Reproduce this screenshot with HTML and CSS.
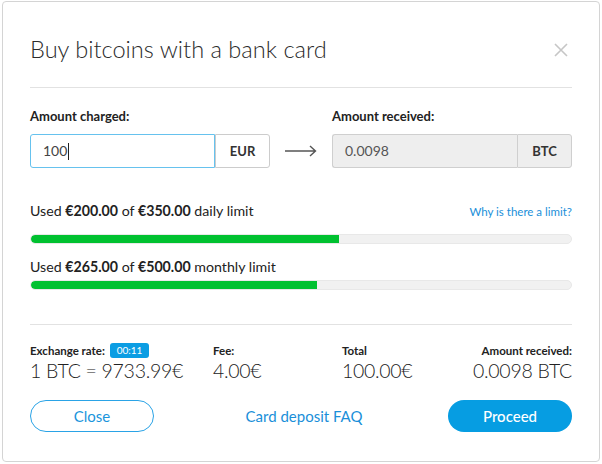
FILE: index.html
```html
<!DOCTYPE html>
<html>
<head>
<meta charset="utf-8">
<link rel="stylesheet" href="styles.css">
</head>
<body>
<div class="modal">
  <div class="header">
    <h1 class="title">Buy bitcoins with a bank card</h1>
    <svg class="close-x" width="14" height="14" viewBox="0 0 14 14"><path d="M1 1L13 13M13 1L1 13" stroke="#c6c6c6" stroke-width="1.6" fill="none"/></svg>
  </div>
  <div class="body">
    <div class="amounts">
      <div class="field">
        <div class="label">Amount charged:</div>
        <div class="group">
          <div class="input active">100<span class="caret"></span></div>
          <div class="addon">EUR</div>
        </div>
      </div>
      <svg class="arrow" width="32" height="12" viewBox="0 0 32 12"><path d="M0 6H30M25 1L30.5 6L25 11" stroke="#555" stroke-width="1.4" fill="none"/></svg>
      <div class="field">
        <div class="label">Amount received:</div>
        <div class="group disabled">
          <div class="input">0.0098</div>
          <div class="addon">BTC</div>
        </div>
      </div>
    </div>
    <div class="limit-row first">
      <span>Used <b>€200.00</b> of <b>€350.00</b> daily limit</span>
      <a class="why">Why is there a limit?</a>
    </div>
    <div class="bar bar-daily"><div class="fill" style="width:57.1%"></div></div>
    <div class="limit-row second">
      <span>Used <b>€265.00</b> of <b>€500.00</b> monthly limit</span>
    </div>
    <div class="bar"><div class="fill" style="width:53%"></div></div>
  </div>
  <div class="footer">
    <div class="stats">
      <div class="stat">
        <div class="stat-label">Exchange rate: <span class="badge">00:11</span></div>
        <div class="stat-value">1 BTC = 9733.99€</div>
      </div>
      <div class="stat">
        <div class="stat-label">Fee:</div>
        <div class="stat-value">4.00€</div>
      </div>
      <div class="stat">
        <div class="stat-label">Total</div>
        <div class="stat-value">100.00€</div>
      </div>
      <div class="stat right">
        <div class="stat-label">Amount received:</div>
        <div class="stat-value">0.0098 BTC</div>
      </div>
    </div>
    <div class="actions">
      <button class="btn btn-outline">Close</button>
      <a class="faq">Card deposit FAQ</a>
      <button class="btn btn-primary">Proceed</button>
    </div>
  </div>
</div>
</body>
</html>
```

FILE: styles.css
```css
* { box-sizing: border-box; }
html, body { margin: 0; padding: 0; background: #fff; }
body {
  font-family: Lato, "Open Sans", "Liberation Sans", sans-serif;
  color: #222;
}
.modal {
  margin: 1px 2px 0 2px;
  width: 598px;
  height: 461px;
  border: 1px solid #d4d4d4;
  border-radius: 4px;
  background: #fff;
  padding: 0 27px;
}
.header {
  display: flex;
  justify-content: space-between;
  align-items: center;
  padding: 33px 4px 24px 0;
  border-bottom: 1px solid #e2e2e2;
}
.title {
  margin: 0;
  font-size: 23.6px;
  line-height: 28px;
  font-weight: 300;
  color: #2b2b2b;
}
.close-x { display: block; margin-top: 2px; }
.body { padding-top: 20px; padding-bottom: 34px; border-bottom: 1px solid #e2e2e2; }
.amounts { display: flex; align-items: flex-end; justify-content: space-between; }
.field { width: 240px; }
.label { font-size: 13px; font-weight: 700; line-height: 16px; margin-bottom: 10px; color: #222; }
.group { display: flex; height: 34px; }
.input {
  flex: 1;
  border: 1px solid #ccc;
  border-right: none;
  border-radius: 3px 0 0 3px;
  font-size: 14px;
  line-height: 32px;
  padding-left: 12px;
  color: #444;
}
.input.active { border: 1px solid #66c2ee; }
.caret { display: inline-block; width: 1px; height: 17px; background: #222; vertical-align: -4px; margin-left: 1px; }
.addon {
  width: 55px;
  border: 1px solid #ccc;
  border-radius: 0 3px 3px 0;
  font-size: 13px;
  font-weight: 700;
  line-height: 32px;
  text-align: center;
  color: #333;
}
.group.disabled .input, .group.disabled .addon { background: #eeeeee; border-color: #cfcfcf; }
.group.disabled .input { color: #555; }
.arrow { margin-bottom: 11px; }
.limit-row {
  display: flex;
  justify-content: space-between;
  align-items: baseline;
  font-size: 14.2px;
  line-height: 18px;
  color: #222;
}
.limit-row b { font-weight: 700; }
.limit-row.first { margin-top: 34px; margin-bottom: 13px; }
.limit-row.second { margin-top: 14px; margin-bottom: 4px; }
.why { font-size: 11.5px; color: #1a8fd9; }
.bar {
  height: 10px;
  border-radius: 5px;
  background: #f1f1f1;
  border: 1px solid #e8e8e8;
  overflow: hidden;
}
.fill { height: 100%; background: #00c130; border-radius: 5px 0 0 5px; }
.footer { padding-top: 18px; }
.stats {
  display: grid;
  grid-template-columns: 183px 129px 1fr auto;
}
.stat-label {
  font-size: 11.5px;
  font-weight: 700;
  line-height: 16px;
  height: 16px;
  color: #222;
  white-space: nowrap;
}
.badge {
  display: inline-block;
  background: #0b9de3;
  color: #fff;
  font-weight: 400;
  font-size: 10px;
  line-height: 15px;
  padding: 0 7px;
  border-radius: 3px;
  vertical-align: 1px;
  margin-left: 2px;
}
.stat-value {
  font-size: 19.5px;
  letter-spacing: -0.3px;
  font-weight: 300;
  line-height: 24px;
  margin-top: 0;
  color: #222;
  white-space: nowrap;
}
.right { text-align: right; }
.actions {
  display: flex;
  justify-content: space-between;
  align-items: center;
  margin-top: 17px;
}
.btn {
  width: 124px;
  height: 32px;
  border-radius: 16px;
  font-family: inherit;
  font-size: 15px;
  padding: 0;
  cursor: pointer;
}
.btn-outline { background: #fff; border: 1.5px solid #2aa3e6; color: #1a95dc; }
.btn-primary { background: #069de2; border: none; color: #fff; font-weight: 500; }
.faq { font-size: 15px; color: #1a8fd9; margin-left: 6px; }
```
